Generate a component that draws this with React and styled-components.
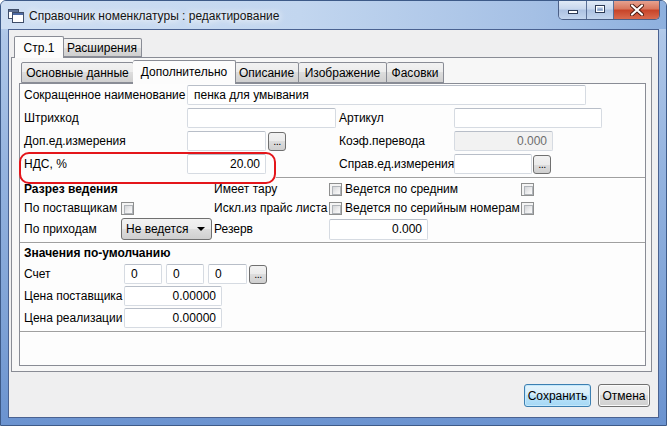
import styled, { createGlobalStyle } from "styled-components";

const GlobalStyle = createGlobalStyle`
  html, body {
    margin: 0;
    padding: 0;
    background: #ffffff;
  }
  body {
    font-family: "Liberation Sans", Arial, sans-serif;
    font-size: 12px;
    color: #000000;
  }
  * {
    box-sizing: border-box;
  }
`;

const Window = styled.div`
  width: 667px;
  height: 426px;
  display: flex;
  flex-direction: column;
  border: 1px solid #3d5a88;
  border-radius: 6px 6px 0 0;
  overflow: hidden;
  background: linear-gradient(
    180deg,
    #c6d9f1 0%,
    #afc7e8 8%,
    #94b3df 40%,
    #7ea2d6 75%,
    #6b93d0 100%
  );
`;

const TitleBar = styled.div`
  height: 28px;
  display: flex;
  align-items: flex-start;
  padding-left: 7px;
  background: linear-gradient(90deg, #cfdff3 0%, #c2d6ef 45%, #a5c0e5 80%, #8eb0de 100%);
`;

const TitleIcon = styled.svg`
  margin-top: 8px;
  flex-shrink: 0;
`;

const Title = styled.div`
  margin-left: 5px;
  margin-top: 7px;
  line-height: 16px;
  font-size: 12px;
  color: #141414;
  text-shadow: 0 0 6px #ffffff, 0 0 10px #ffffff;
`;

const WinButtons = styled.div`
  margin-left: auto;
  margin-right: 6px;
  margin-top: -1px;
  display: flex;
  height: 20px;
  border: 1px solid #4b5f86;
  border-top: none;
  border-radius: 0 0 5px 5px;
  overflow: hidden;
`;

const WinButton = styled.div`
  width: ${(p) => p.$w}px;
  height: 100%;
  display: flex;
  align-items: center;
  justify-content: center;
  border-left: ${(p) => (p.$first ? "none" : "1px solid #5a6f96")};
  background: ${(p) =>
    p.$close
      ? "linear-gradient(180deg, #e8a796 0%, #d9785f 45%, #c8452a 55%, #d96b4f 100%)"
      : "linear-gradient(180deg, #e3ecf8 0%, #c9d8ee 45%, #adc2e2 55%, #c3d5ee 100%)"};
`;

const Client = styled.div`
  flex: 1;
  margin: 0 7px 7px 7px;
  border: 1px solid #4a6291;
  background: #efeff0;
  display: flex;
  flex-direction: column;
`;

const OuterTabs = styled.div`
  margin: 0 6px 0 2px;
  display: flex;
  flex-direction: column;
`;

const TabStrip = styled.div`
  display: flex;
  align-items: flex-end;
  height: ${(p) => p.$h}px;
  margin-top: ${(p) => p.$top}px;
  padding-left: ${(p) => p.$pad}px;
  position: relative;
  z-index: 1;
`;

const Tab = styled.div`
  width: ${(p) => p.$w}px;
  height: ${(p) => (p.$active ? p.$h + 3 : p.$h)}px;
  margin-bottom: ${(p) => (p.$active ? -1 : 0)}px;
  margin-left: ${(p) => (p.$active ? -1 : 0)}px;
  margin-right: ${(p) => (p.$active ? -1 : 0)}px;
  border: 1px solid #898c95;
  border-bottom: ${(p) => (p.$active ? "none" : "1px solid #898c95")};
  border-radius: 2px 2px 0 0;
  display: flex;
  align-items: ${(p) => (p.$active ? "flex-start" : "center")};
  padding-top: ${(p) => (p.$active ? 4 : 1)}px;
  justify-content: center;
  white-space: nowrap;
  position: relative;
  z-index: ${(p) => (p.$active ? 2 : 1)};
  background: ${(p) =>
    p.$active
      ? "#fcfcfc"
      : "linear-gradient(180deg, #f2f2f2 0%, #ebebeb 50%, #dddddd 50%, #cfcfcf 100%)"};
  & + & {
    border-left: ${(p) => (p.$active ? "1px solid #898c95" : "none")};
  }
`;

const OuterPanel = styled.div`
  height: 315px;
  border: 1px solid #898c95;
  background: #f7f7f7;
  padding: 2px 5px 5px 7px;
  display: flex;
  flex-direction: column;
`;

const InnerPanel = styled.div`
  flex: 1;
  position: relative;
  border: 1px solid #898c95;
  background: #fdfdfd;
`;

const Section = styled.div`
  display: grid;
  grid-template-columns: ${(p) => p.$cols};
  grid-template-rows: ${(p) => p.$rows};
  row-gap: ${(p) => p.$gap || 0}px;
  margin-top: ${(p) => p.$top || 0}px;
  padding-left: 4px;
  align-items: center;
`;

const Separator = styled.div`
  height: 2px;
  margin: ${(p) => p.$top}px 0 ${(p) => p.$bottom}px ${(p) => p.$indent || 0}px;
  border-top: 1px solid #a0a0a0;
  border-bottom: 1px solid #ffffff;
`;

const Label = styled.div`
  white-space: nowrap;
  font-weight: ${(p) => (p.$bold ? 700 : 400)};
  grid-column: ${(p) => p.$col || "auto"};
  line-height: 16px;
`;

const Cell = styled.div`
  display: flex;
  align-items: center;
  gap: ${(p) => p.$gap || 0}px;
  grid-column: ${(p) => p.$col || "auto"};
`;

const TextBox = styled.div`
  width: ${(p) => p.$w}px;
  height: ${(p) => p.$h || 20}px;
  border: 1px solid #d6dbe2;
  border-top-color: #b8bec8;
  border-radius: 2px;
  background: ${(p) => (p.$disabled ? "#f2f2f2" : "#ffffff")};
  color: ${(p) => (p.$disabled ? "#6d6d6d" : "#000000")};
  display: flex;
  align-items: center;
  justify-content: ${(p) => (p.$right ? "flex-end" : "flex-start")};
  padding: 0 5px 0 6px;
  white-space: nowrap;
`;

const DotsButton = styled.div`
  width: 18px;
  height: 19px;
  margin-left: ${(p) => p.$ml || 0}px;
  border: 1px solid #707070;
  border-radius: 3px;
  background: linear-gradient(180deg, #f2f2f2 0%, #ebebeb 50%, #dddddd 50%, #cfcfcf 100%);
  display: flex;
  align-items: flex-end;
  justify-content: center;
  padding-bottom: 4px;
  font-size: 11px;
  line-height: 10px;
  letter-spacing: -0.5px;
`;

const Check = styled.div`
  width: 13px;
  height: 13px;
  border: 1px solid #8e8f8f;
  background: #f4f4f4;
  padding: 2px;
  grid-column: ${(p) => p.$col || "auto"};
  &::after {
    content: "";
    display: block;
    width: 100%;
    height: 100%;
    border: 1px solid #b0b4b9;
    background: linear-gradient(135deg, #d4d6d9 0%, #eeeeef 60%, #fafafa 100%);
  }
`;

const Combo = styled.div`
  width: 91px;
  height: 22px;
  border: 1px solid #707070;
  border-radius: 3px;
  background: linear-gradient(180deg, #f2f2f2 0%, #ebebeb 50%, #dddddd 50%, #cfcfcf 100%);
  display: flex;
  align-items: center;
  padding: 0 6px 0 4px;
  white-space: nowrap;

  span {
    flex: 1;
  }
`;

const Arrow = styled.div`
  width: 0;
  height: 0;
  border-left: 4px solid transparent;
  border-right: 4px solid transparent;
  border-top: 4px solid #000000;
`;

const Highlight = styled.div`
  position: absolute;
  left: -1px;
  top: 68px;
  width: 257px;
  height: 32px;
  border: 2px solid #e4161b;
  border-radius: 10px;
  pointer-events: none;
`;

const ButtonBar = styled.div`
  display: flex;
  justify-content: flex-end;
  gap: 7px;
  margin-top: 12px;
  padding-right: 8px;
`;

const DialogButton = styled.div`
  width: ${(p) => p.$w}px;
  height: 23px;
  border: 1px solid ${(p) => (p.$default ? "#3c7fb1" : "#707070")};
  border-radius: 3px;
  display: flex;
  align-items: center;
  justify-content: center;
  box-shadow: ${(p) => (p.$default ? "inset 0 0 0 1px #c4e8fb" : "inset 0 0 0 1px #fbfbfb")};
  background: ${(p) =>
    p.$default
      ? "linear-gradient(180deg, #e5f4fc 0%, #d4ecfa 50%, #bce3f9 50%, #a5d8f5 100%)"
      : "linear-gradient(180deg, #f2f2f2 0%, #ebebeb 50%, #dddddd 50%, #cfcfcf 100%)"};
`;

const WindowIcon = () => (
  <TitleIcon width="16" height="14" viewBox="0 0 16 14">
    <rect x="0.5" y="0.5" width="10" height="9" fill="#ffffff" stroke="#3e4d68" />
    <rect x="1" y="1" width="9" height="2" fill="#5d7093" />
    <rect x="4.5" y="3.5" width="11" height="10" fill="#ffffff" stroke="#3e4d68" />
    <rect x="5" y="4" width="10" height="2" fill="#4d6aa3" />
  </TitleIcon>
);

const MinGlyph = () => (
  <svg width="12" height="10" viewBox="0 0 12 10">
    <rect x="1.5" y="5.5" width="9" height="3" fill="#ffffff" stroke="#2c3a55" />
  </svg>
);

const MaxGlyph = () => (
  <svg width="12" height="11" viewBox="0 0 12 11">
    <rect x="1.5" y="1.5" width="9" height="7" fill="none" stroke="#2c3a55" />
    <rect x="2.5" y="2.5" width="7" height="5" fill="none" stroke="#ffffff" />
    <rect x="3.5" y="4.5" width="5" height="2" fill="#8aa2c8" />
  </svg>
);

const CloseGlyph = () => (
  <svg width="14" height="12" viewBox="0 0 14 12">
    <path
      d="M2 1.5 L12 10.5 M12 1.5 L2 10.5"
      stroke="#4b1a10"
      strokeWidth="4"
      strokeLinecap="round"
    />
    <path
      d="M2 1.5 L12 10.5 M12 1.5 L2 10.5"
      stroke="#ffffff"
      strokeWidth="2.2"
      strokeLinecap="round"
    />
  </svg>
);

const innerTabs = [
  { label: "Основные данные", w: 113 },
  { label: "Дополнительно", w: 103, active: true },
  { label: "Описание", w: 64 },
  { label: "Изображение", w: 88 },
  { label: "Фасовки", w: 57 },
];

export default function App() {
  return (
    <>
      <GlobalStyle />
      <Window>
        <TitleBar>
          <WindowIcon />
          <Title>Справочник номенклатуры : редактирование</Title>
          <WinButtons>
            <WinButton $w={27} $first>
              <MinGlyph />
            </WinButton>
            <WinButton $w={27}>
              <MaxGlyph />
            </WinButton>
            <WinButton $w={46} $close>
              <CloseGlyph />
            </WinButton>
          </WinButtons>
        </TitleBar>

        <Client>
          <OuterTabs>
            <TabStrip $h={22} $top={5} $pad={4}>
              <Tab $w={50} $h={19} $active>
                Стр.1
              </Tab>
              <Tab $w={79} $h={19}>
                Расширения
              </Tab>
            </TabStrip>

            <OuterPanel>
              <TabStrip $h={23} $top={0} $pad={2}>
                {innerTabs.map((t) => (
                  <Tab key={t.label} $w={t.w} $h={21} $active={t.active}>
                    {t.label}
                  </Tab>
                ))}
              </TabStrip>

              <InnerPanel>
                <Section $cols="163px 152px 115px auto" $rows="repeat(4, 20px)" $gap={3} $top={1}>
                  <Label>Сокращенное наименование</Label>
                  <Cell $col="2 / 5">
                    <TextBox $w={399}>пенка для умывания</TextBox>
                  </Cell>

                  <Label>Штрихкод</Label>
                  <Cell>
                    <TextBox $w={149} />
                  </Cell>
                  <Label>Артикул</Label>
                  <Cell>
                    <TextBox $w={148} />
                  </Cell>

                  <Label>Доп.ед.измерения</Label>
                  <Cell>
                    <TextBox $w={79} />
                    <DotsButton $ml={2}>...</DotsButton>
                  </Cell>
                  <Label>Коэф.перевода</Label>
                  <Cell>
                    <TextBox $w={99} $right $disabled>
                      0.000
                    </TextBox>
                  </Cell>

                  <Label>НДС, %</Label>
                  <Cell>
                    <TextBox $w={79} $right>
                      20.00
                    </TextBox>
                  </Cell>
                  <Label>Справ.ед.измерения</Label>
                  <Cell>
                    <TextBox $w={78} />
                    <DotsButton $ml={1}>...</DotsButton>
                  </Cell>
                </Section>

                <Separator $top={3} $bottom={1} $indent={256} />

                <Section $cols="97px 93px 115px 16px 176px 13px" $rows="18px 20px 22px">
                  <Label $bold>Разрез ведения</Label>
                  <Label $col="3">Имеет тару</Label>
                  <Check $col="4" />
                  <Label $col="5">Ведется по средним</Label>
                  <Check $col="6" />

                  <Label>По поставщикам</Label>
                  <Check $col="2" />
                  <Label $col="3">Искл.из прайс листа</Label>
                  <Check $col="4" />
                  <Label $col="5">Ведется по серийным номерам</Label>
                  <Check $col="6" />

                  <Label>По приходам</Label>
                  <Cell $col="2">
                    <Combo>
                      <span>Не ведется</span>
                      <Arrow />
                    </Combo>
                  </Cell>
                  <Label $col="3">Резерв</Label>
                  <Cell $col="4 / 7">
                    <TextBox $w={99} $h={21} $right>
                      0.000
                    </TextBox>
                  </Cell>
                </Section>

                <Separator $top={2} $bottom={0} />

                <Section $cols="100px auto" $rows="18px 20px 20px 20px" $gap={2}>
                  <Label $bold $col="1 / 3">
                    Значения по-умолчанию
                  </Label>

                  <Label>Счет</Label>
                  <Cell $gap={4}>
                    <TextBox $w={38}>0</TextBox>
                    <TextBox $w={38}>0</TextBox>
                    <TextBox $w={39}>0</TextBox>
                    <DotsButton $ml={-2}>...</DotsButton>
                  </Cell>

                  <Label>Цена поставщика</Label>
                  <Cell>
                    <TextBox $w={98} $right>
                      0.00000
                    </TextBox>
                  </Cell>

                  <Label>Цена реализации</Label>
                  <Cell>
                    <TextBox $w={98} $right>
                      0.00000
                    </TextBox>
                  </Cell>
                </Section>

                <Separator $top={3} $bottom={0} />

                <Highlight />
              </InnerPanel>
            </OuterPanel>
          </OuterTabs>

          <ButtonBar>
            <DialogButton $w={67} $default>
              Сохранить
            </DialogButton>
            <DialogButton $w={52}>Отмена</DialogButton>
          </ButtonBar>
        </Client>
      </Window>
    </>
  );
}
